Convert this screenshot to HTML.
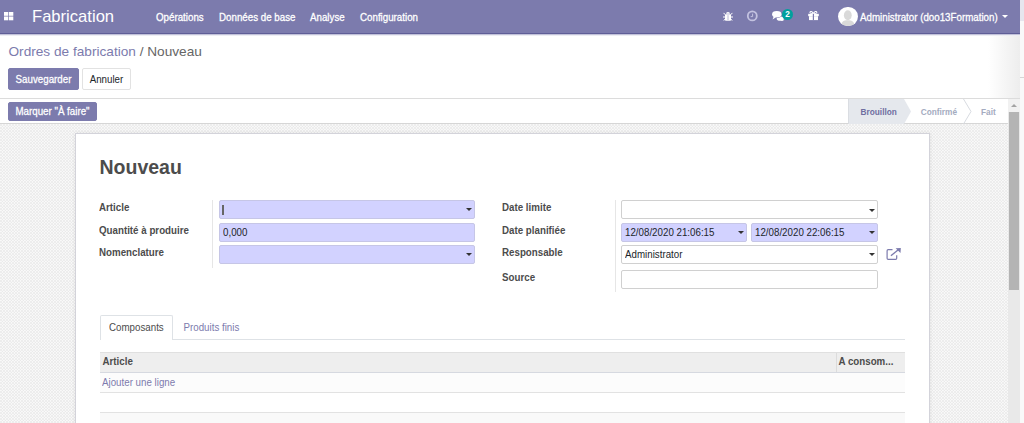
<!DOCTYPE html>
<html><head><meta charset="utf-8">
<style>
*{box-sizing:border-box;margin:0;padding:0}
html,body{width:1024px;height:423px;overflow:hidden;background:#f2f2f2}
body{font-family:"Liberation Sans",sans-serif;font-size:9.75px;color:#4c4c4c;position:relative}
.a{position:absolute;white-space:nowrap}
#nav{left:0;top:0;width:1020px;height:34px;background:#7c7bad;border-bottom:1px solid #5f5e97;box-shadow:0 1px 0 #c2c2d9,0 2px 0 #ededf4;z-index:2}
#rstrip{left:1020px;top:0;width:4px;height:423px;background:#f9f9f9}
.nt{color:#fff;font-size:9.75px;top:11.6px;line-height:11px;-webkit-text-stroke:0.25px #fff}
#cp{left:0;top:34px;width:1020px;height:65px;background:linear-gradient(to right,#fff 988px,#ededed 1020px);border-bottom:1px solid #dcdcdc}
#sb{left:0;top:99px;width:1008px;height:25px;background:#fff;border-bottom:1px solid #d6d6d6}
#bg{left:0;top:124px;width:1008px;height:299px;background-color:#f9f9f9;background-image:radial-gradient(circle at 1px 1px,#e9e9e9 0.6px,rgba(233,233,233,0) 1.1px),radial-gradient(circle at 2.5px 2.5px,#e9e9e9 0.6px,rgba(233,233,233,0) 1.1px);background-size:3px 3px}
.btn{height:22px;line-height:20px;padding-top:1px;border-radius:2px;text-align:center;font-size:9.75px}
.bp{background:#7c7bad;color:#fff;border:1px solid #7c7bad;-webkit-text-stroke:0.25px #fff}
.bs{background:#fff;color:#212529;border:1px solid #e2e2e2}
#sheet{left:75px;top:133px;width:855px;height:300px;background:#fff;border:1px solid #d3d3da;box-shadow:0 0 4px rgba(0,0,0,.08)}
.lbl{font-weight:bold;color:#4c4c4c;line-height:12px}
.inp{height:19px;border:1px solid #cfcfe3;border-radius:2px;line-height:17px;padding-left:3px;color:#212529}
.req{background:#d2d2ff;border-color:#c6c6e6}
.wh{background:#fff;border-color:#d0d0d0}
.caret{width:0;height:0;border-left:3px solid transparent;border-right:3px solid transparent;border-top:3px solid #333}
.vsep{width:1px;background:#e6e6e6}
.t{display:inline-block;line-height:1.13em;transform:scaleY(1.15);transform-origin:0 0.91em}
#scroll{left:1008px;top:99px;width:12px;height:324px;background:#e9e9e9}
</style></head>
<body>
<!-- navbar -->
<div id="nav" class="a">
  <svg class="a" style="left:4px;top:12px" width="10" height="9" viewBox="0 0 10 9">
    <rect x="0" y="0" width="4.3" height="3.8" fill="#fff"/><rect x="5" y="0" width="4.3" height="3.8" fill="#fff"/>
    <rect x="0" y="4.5" width="4.3" height="3.8" fill="#fff"/><rect x="5" y="4.5" width="4.3" height="3.8" fill="#fff"/>
  </svg>
  <div class="a" style="left:32px;top:7px;font-size:16.6px;color:#fff;line-height:20px">Fabrication</div>
  <div class="a nt" style="left:156px"><span class="t">Opérations</span></div>
  <div class="a nt" style="left:219px"><span class="t">Données de base</span></div>
  <div class="a nt" style="left:310px"><span class="t">Analyse</span></div>
  <div class="a nt" style="left:360px"><span class="t">Configuration</span></div>
  <!-- bug -->
  <svg class="a" style="left:723px;top:12px" width="10" height="9" viewBox="0 0 10 9">
    <path d="M3 1.8 A2 1.8 0 0 1 7 1.8 Z" fill="#fff"/>
    <rect x="2" y="2.3" width="6" height="6.4" rx="0.8" fill="#fff"/>
    <path d="M0.6 0.9 L2.3 2.8 M9.4 0.9 L7.7 2.8 M0 5 H2.2 M10 5 H7.8 M0.6 8.6 L2.3 7 M9.4 8.6 L7.7 7" stroke="#fff" stroke-width="1"/>
    <line x1="5" y1="3.2" x2="5" y2="8" stroke="#a9a8cc" stroke-width="0.8"/>
  </svg>
  <!-- clock -->
  <svg class="a" style="left:746px;top:10px" width="13" height="12" viewBox="0 0 13 12">
    <circle cx="6.3" cy="5.9" r="4.5" fill="none" stroke="#c3c2e0" stroke-width="1.8"/>
    <path d="M6.6 3.6 V6.6 H4.7" fill="none" stroke="#c3c2e0" stroke-width="1"/>
  </svg>
  <!-- chat -->
  <svg class="a" style="left:771px;top:10px" width="15" height="12" viewBox="0 0 15 12">
    <ellipse cx="9.3" cy="8.7" rx="3.6" ry="2.1" fill="#fff"/>
    <path d="M11 9.5 L13 10.9 L9.5 10.6Z" fill="#fff"/>
    <ellipse cx="5.8" cy="4.3" rx="5.4" ry="3.8" fill="#7c7bad"/>
    <ellipse cx="5.8" cy="4.3" rx="4.7" ry="3.2" fill="#fff"/>
    <path d="M2.6 6.6 L1.6 9.4 L5 7.3Z" fill="#fff"/>
  </svg>
  <div class="a" style="left:782px;top:8.8px;width:11px;height:11px;border-radius:50%;background:#00a09d;color:#fff;font-size:8.25px;font-weight:bold;line-height:11px;text-align:center">2</div>
  <!-- gift -->
  <svg class="a" style="left:807px;top:11px" width="13" height="10" viewBox="0 0 13 10">
    <path d="M6.4 2.5 C5 -0.3 2.6 0.2 3.1 1.9 C3.3 2.4 4.5 2.5 6.4 2.5 C8.3 2.5 9.5 2.4 9.7 1.9 C10.2 0.2 7.8 -0.3 6.4 2.5Z" fill="none" stroke="#fff" stroke-width="1.1"/>
    <rect x="1.2" y="2.8" width="10.6" height="2.4" fill="#fff"/>
    <rect x="2" y="5.2" width="9" height="3.9" fill="#fff"/>
    <rect x="5.8" y="2.8" width="1.2" height="6.3" fill="#7c7bad"/>
  </svg>
  <!-- avatar -->
  <div class="a" style="left:838px;top:6.6px;width:19.5px;height:19.5px;border-radius:50%;background:#fff;overflow:hidden">
    <svg width="20" height="20" viewBox="0 0 20 20" style="display:block">
      <ellipse cx="9.8" cy="8.3" rx="3.9" ry="5" fill="#d9d9d9"/>
      <path d="M2.5 20 C2.8 15.5 5 13.8 8 13.2 H11.6 C14.6 13.8 16.8 15.5 17.1 20Z" fill="#d9d9d9"/>
    </svg>
  </div>
  <div class="a nt" style="left:860px"><span class="t">Administrator (doo13Formation)</span></div>
  <div class="a caret" style="left:1002px;top:15px;border-top-color:#fff;border-left-width:3px;border-right-width:3px;border-top-width:3px"></div>
</div>
<div id="rstrip" class="a"><div class="a" style="left:0;top:0;width:4px;height:21px;background:#e6e6ee"></div><div class="a" style="left:0;top:77px;width:4px;height:1px;background:#d6d6d6"></div></div>

<!-- control panel -->
<div id="cp" class="a">
  <div class="a" style="left:8.5px;top:10px;font-size:13.65px;line-height:16px"><span style="color:#7c7bad">Ordres de fabrication</span><span style="color:#666"> / Nouveau</span></div>
  <div class="a btn bp" style="left:8px;top:34px;width:71px"><span class="t">Sauvegarder</span></div>
  <div class="a btn bs" style="left:82px;top:34px;width:49px"><span class="t">Annuler</span></div>
</div>

<!-- status bar -->
<div id="sb" class="a">
  <div class="a btn bp" style="left:8px;top:3px;width:89px;height:19px;line-height:16px;padding-top:0.5px"><span class="t">Marquer "À faire"</span></div>
  <svg class="a" style="left:848px;top:0px" width="160" height="25" viewBox="0 0 160 25">
    <path d="M1 0 H56 L63 12.5 L56 25 H1Z" fill="#e5e8ed"/>
    <line x1="0.5" y1="0" x2="0.5" y2="25" stroke="#dadde2" stroke-width="1"/>
    <path d="M115.5 0 L123 12.5 L115.5 25" fill="none" stroke="#d8dbe0" stroke-width="1"/>
  </svg>
  <div class="a" style="left:860.6px;top:8px;font-size:8.25px;font-weight:bold;color:#6f6ea0;line-height:11px">Brouillon</div>
  <div class="a" style="left:920.8px;top:8px;font-size:8.25px;font-weight:bold;color:#a4abc0;line-height:11px">Confirmé</div>
  <div class="a" style="left:981px;top:8px;font-size:8.25px;font-weight:bold;color:#a4abc0;line-height:11px">Fait</div>
</div>

<div id="bg" class="a"></div>

<!-- scrollbar -->
<div id="scroll" class="a">
  <div class="a" style="left:0;top:0;width:12px;height:13px;background:#f1f1f1"></div><div class="a" style="left:3px;top:5px;width:0;height:0;border-left:3px solid transparent;border-right:3px solid transparent;border-bottom:3px solid #a3a3a3"></div>
  <div class="a" style="left:1px;top:13px;width:10px;height:178px;background:#b4b4b4"></div>
</div>

<!-- sheet -->
<div id="sheet" class="a"></div>
<div class="a" style="left:99.5px;top:154.5px;font-size:19.5px;font-weight:bold;color:#4c4c4c;line-height:24px">Nouveau</div>

<!-- left group -->
<div class="a lbl" style="left:99px;top:202px"><span class="t">Article</span></div>
<div class="a lbl" style="left:99px;top:225px"><span class="t">Quantité à produire</span></div>
<div class="a lbl" style="left:99px;top:247px"><span class="t">Nomenclature</span></div>
<div class="a vsep" style="left:212px;top:200px;height:68px"></div>
<div class="a inp req" style="left:219px;top:200px;width:256px"><div class="a" style="left:2px;top:4px;width:2px;height:10px;background:#666"></div></div>
<div class="a caret" style="left:466px;top:208px"></div>
<div class="a inp req" style="left:219px;top:223px;width:256px"><span class="t">0,000</span></div>
<div class="a inp req" style="left:219px;top:245px;width:256px"></div>
<div class="a caret" style="left:466px;top:253px"></div>

<!-- right group -->
<div class="a lbl" style="left:502px;top:202px"><span class="t">Date limite</span></div>
<div class="a lbl" style="left:502px;top:225px"><span class="t">Date planifiée</span></div>
<div class="a lbl" style="left:502px;top:247px"><span class="t">Responsable</span></div>
<div class="a lbl" style="left:502px;top:272px"><span class="t">Source</span></div>
<div class="a vsep" style="left:615px;top:200px;height:92px"></div>
<div class="a inp wh" style="left:621px;top:200px;width:257px"></div>
<div class="a caret" style="left:869px;top:209px"></div>
<div class="a inp req" style="left:621px;top:223px;width:126px"><span class="t">12/08/2020 21:06:15</span></div>
<div class="a caret" style="left:738px;top:231px"></div>
<div class="a inp req" style="left:751px;top:223px;width:127px"><span class="t">12/08/2020 22:06:15</span></div>
<div class="a caret" style="left:869px;top:231px"></div>
<div class="a inp wh" style="left:621px;top:245px;width:257px"><span class="t">Administrator</span></div>
<div class="a caret" style="left:869px;top:253px"></div>
<svg class="a" style="left:885px;top:247px" width="17" height="14" viewBox="0 0 17 14">
  <path d="M7.5 2.7 H3.2 Q2.1 2.7 2.1 3.8 V11.3 Q2.1 12.4 3.2 12.4 H10.6 Q11.7 12.4 11.7 11.3 V8.3" fill="none" stroke="#7c7bad" stroke-width="1.2"/>
  <path d="M5.9 8.8 L13.6 2.6" fill="none" stroke="#7c7bad" stroke-width="1.3"/>
  <path d="M10.6 1.2 L15.8 0.9 L15.5 6.1Z" fill="#7c7bad"/>
</svg>
<div class="a inp wh" style="left:621px;top:270px;width:257px"></div>

<!-- notebook -->
<div class="a" style="left:100px;top:339px;width:805px;height:1px;background:#dee2e6"></div>
<div class="a" style="left:100px;top:315px;width:73px;height:25px;background:#fff;border:1px solid #dee2e6;border-bottom:none;border-radius:2px 2px 0 0"></div>
<div class="a" style="left:109px;top:322px;color:#4c4c4c;line-height:12px"><span class="t">Composants</span></div>
<div class="a" style="left:183.5px;top:322px;color:#7c7bad;line-height:12px"><span class="t">Produits finis</span></div>

<!-- table -->
<div class="a" style="left:100px;top:352px;width:805px;height:21px;background:#eeeeee;border-top:1px solid #e0e0e0;border-bottom:1px solid #d6d9e0"></div>
<div class="a" style="left:836px;top:353px;width:1px;height:19px;background:#dcdcdc"></div>
<div class="a lbl" style="left:102.5px;top:356px;color:#4c4c4c"><span class="t">Article</span></div>
<div class="a lbl" style="left:838.5px;top:356px;color:#4c4c4c"><span class="t">A consom...</span></div>
<div class="a" style="left:100px;top:373px;width:805px;height:20px;background:#fcfcfc;border-bottom:1px solid #e2e2e2"></div>
<div class="a" style="left:102px;top:377px;color:#7c7bad;line-height:12px"><span class="t">Ajouter une ligne</span></div>
<div class="a" style="left:100px;top:412px;width:805px;height:11px;background:#f9f9f9;border-top:1px solid #e2e2e2"></div>
</body></html>
